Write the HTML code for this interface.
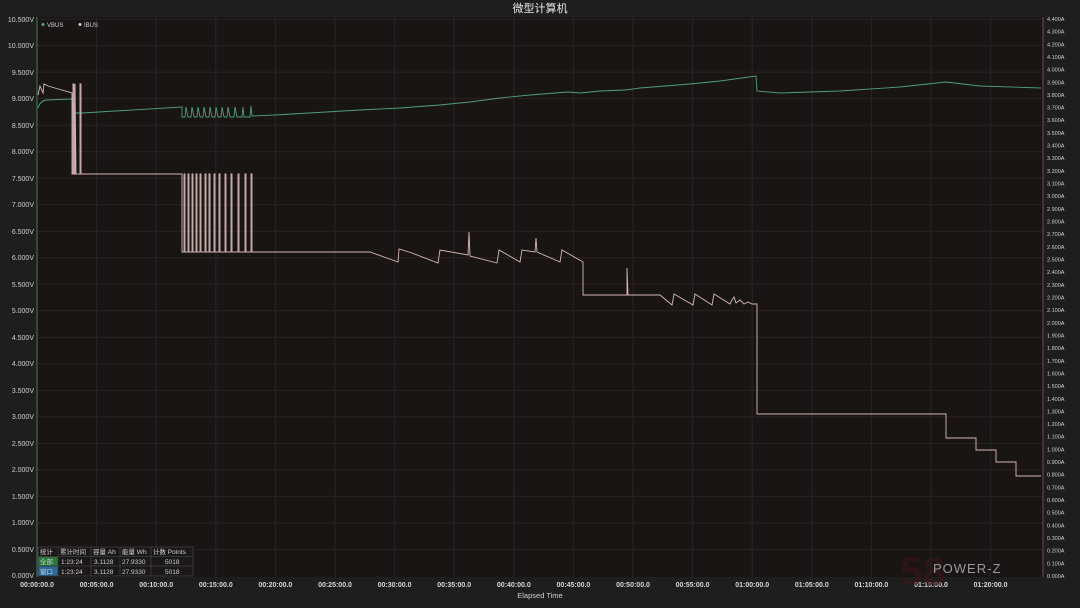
<!DOCTYPE html>
<html><head><meta charset="utf-8"><style>
html,body{margin:0;padding:0;background:#1e1e1e;width:1080px;height:608px;overflow:hidden}
svg text{font-family:"Liberation Sans","Noto Sans CJK SC",sans-serif}
</style></head><body>
<svg width="1080" height="608" viewBox="0 0 1080 608" xmlns="http://www.w3.org/2000/svg">
<rect width="1080" height="608" fill="#1f1e1e"/>
<rect x="37" y="17" width="1006" height="560" fill="#191515"/>
<text x="540" y="12" fill="#e8e8e8" font-size="11" text-anchor="middle">微型计算机</text>
<g stroke="#2a2323" stroke-width="1">
<line x1="37" x2="1043" y1="549.5" y2="549.5"/><line x1="37" x2="1043" y1="523" y2="523"/><line x1="37" x2="1043" y1="496.4" y2="496.4"/><line x1="37" x2="1043" y1="469.9" y2="469.9"/><line x1="37" x2="1043" y1="443.4" y2="443.4"/><line x1="37" x2="1043" y1="416.9" y2="416.9"/><line x1="37" x2="1043" y1="390.4" y2="390.4"/><line x1="37" x2="1043" y1="363.8" y2="363.8"/><line x1="37" x2="1043" y1="337.3" y2="337.3"/><line x1="37" x2="1043" y1="310.8" y2="310.8"/><line x1="37" x2="1043" y1="284.3" y2="284.3"/><line x1="37" x2="1043" y1="257.8" y2="257.8"/><line x1="37" x2="1043" y1="231.2" y2="231.2"/><line x1="37" x2="1043" y1="204.7" y2="204.7"/><line x1="37" x2="1043" y1="178.2" y2="178.2"/><line x1="37" x2="1043" y1="151.7" y2="151.7"/><line x1="37" x2="1043" y1="125.2" y2="125.2"/><line x1="37" x2="1043" y1="98.6" y2="98.6"/><line x1="37" x2="1043" y1="72.1" y2="72.1"/><line x1="37" x2="1043" y1="45.6" y2="45.6"/><line x1="37" x2="1043" y1="19.1" y2="19.1"/>
</g>
<g stroke="#262525" stroke-width="1">
<line y1="17" y2="577" x1="96.6" x2="96.6"/><line y1="17" y2="577" x1="156.2" x2="156.2"/><line y1="17" y2="577" x1="215.8" x2="215.8"/><line y1="17" y2="577" x1="275.4" x2="275.4"/><line y1="17" y2="577" x1="335" x2="335"/><line y1="17" y2="577" x1="394.6" x2="394.6"/><line y1="17" y2="577" x1="454.2" x2="454.2"/><line y1="17" y2="577" x1="513.8" x2="513.8"/><line y1="17" y2="577" x1="573.4" x2="573.4"/><line y1="17" y2="577" x1="633" x2="633"/><line y1="17" y2="577" x1="692.6" x2="692.6"/><line y1="17" y2="577" x1="752.2" x2="752.2"/><line y1="17" y2="577" x1="811.8" x2="811.8"/><line y1="17" y2="577" x1="871.4" x2="871.4"/><line y1="17" y2="577" x1="931" x2="931"/><line y1="17" y2="577" x1="990.6" x2="990.6"/>
</g>
<line x1="37" y1="17" x2="37" y2="577" stroke="#3f7a5a" stroke-width="1"/>
<line x1="1043" y1="17" x2="1043" y2="577" stroke="#6a4a4a" stroke-width="1"/>
<g fill="#cfcfcf" font-size="7" text-anchor="end">
<text x="34" y="578">0.000V</text><text x="34" y="552">0.500V</text><text x="34" y="525">1.000V</text><text x="34" y="499">1.500V</text><text x="34" y="472">2.000V</text><text x="34" y="446">2.500V</text><text x="34" y="419">3.000V</text><text x="34" y="393">3.500V</text><text x="34" y="366">4.000V</text><text x="34" y="340">4.500V</text><text x="34" y="313">5.000V</text><text x="34" y="287">5.500V</text><text x="34" y="260">6.000V</text><text x="34" y="234">6.500V</text><text x="34" y="207">7.000V</text><text x="34" y="181">7.500V</text><text x="34" y="154">8.000V</text><text x="34" y="128">8.500V</text><text x="34" y="101">9.000V</text><text x="34" y="75">9.500V</text><text x="34" y="48">10.000V</text><text x="34" y="22">10.500V</text>
</g>
<g fill="#cfcfcf" font-size="5.5">
<text x="1047" y="578">0.000A</text><text x="1047" y="565.3">0.100A</text><text x="1047" y="552.7">0.200A</text><text x="1047" y="540">0.300A</text><text x="1047" y="527.4">0.400A</text><text x="1047" y="514.7">0.500A</text><text x="1047" y="502">0.600A</text><text x="1047" y="489.4">0.700A</text><text x="1047" y="476.7">0.800A</text><text x="1047" y="464.1">0.900A</text><text x="1047" y="451.4">1.000A</text><text x="1047" y="438.7">1.100A</text><text x="1047" y="426.1">1.200A</text><text x="1047" y="413.4">1.300A</text><text x="1047" y="400.8">1.400A</text><text x="1047" y="388.1">1.500A</text><text x="1047" y="375.4">1.600A</text><text x="1047" y="362.8">1.700A</text><text x="1047" y="350.1">1.800A</text><text x="1047" y="337.5">1.900A</text><text x="1047" y="324.8">2.000A</text><text x="1047" y="312.1">2.100A</text><text x="1047" y="299.5">2.200A</text><text x="1047" y="286.8">2.300A</text><text x="1047" y="274.2">2.400A</text><text x="1047" y="261.5">2.500A</text><text x="1047" y="248.8">2.600A</text><text x="1047" y="236.2">2.700A</text><text x="1047" y="223.5">2.800A</text><text x="1047" y="210.9">2.900A</text><text x="1047" y="198.2">3.000A</text><text x="1047" y="185.5">3.100A</text><text x="1047" y="172.9">3.200A</text><text x="1047" y="160.2">3.300A</text><text x="1047" y="147.6">3.400A</text><text x="1047" y="134.9">3.500A</text><text x="1047" y="122.2">3.600A</text><text x="1047" y="109.6">3.700A</text><text x="1047" y="96.9">3.800A</text><text x="1047" y="84.3">3.900A</text><text x="1047" y="71.6">4.000A</text><text x="1047" y="58.9">4.100A</text><text x="1047" y="46.3">4.200A</text><text x="1047" y="33.6">4.300A</text><text x="1047" y="21">4.400A</text>
</g>
<g fill="#d8d8d8" font-size="7" font-weight="bold" text-anchor="middle">
<text x="37" y="587">00:00:00.0</text><text x="96.6" y="587">00:05:00.0</text><text x="156.2" y="587">00:10:00.0</text><text x="215.8" y="587">00:15:00.0</text><text x="275.4" y="587">00:20:00.0</text><text x="335" y="587">00:25:00.0</text><text x="394.6" y="587">00:30:00.0</text><text x="454.2" y="587">00:35:00.0</text><text x="513.8" y="587">00:40:00.0</text><text x="573.4" y="587">00:45:00.0</text><text x="633" y="587">00:50:00.0</text><text x="692.6" y="587">00:55:00.0</text><text x="752.2" y="587">01:00:00.0</text><text x="811.8" y="587">01:05:00.0</text><text x="871.4" y="587">01:10:00.0</text><text x="931" y="587">01:15:00.0</text><text x="990.6" y="587">01:20:00.0</text>
</g>
<text x="540" y="598" fill="#cfcfcf" font-size="7.5" text-anchor="middle">Elapsed Time</text>
<text x="900" y="585" fill="#3a1616" font-size="40" font-weight="bold" opacity="0.6">58</text>
<text x="933" y="573" fill="#9a9a9a" font-size="13" letter-spacing="1">POWER-Z</text>
<circle cx="43" cy="24.5" r="1.5" fill="#4fae7a"/><text x="47" y="27" fill="#cfcfcf" font-size="6">VBUS</text>
<circle cx="80" cy="24.5" r="1.5" fill="#e0c8c8"/><text x="84" y="27" fill="#cfcfcf" font-size="6">IBUS</text>
<path fill="none" stroke="#4f9f7a" stroke-width="0.9" d="M38,108 Q40,101 46,100 L72,99 L74,113 L82,113 L182,107 L182,117 L185,117 L186,107 L188,117 L191,117 L192,107 L194,117 L197,117 L198,107 L200,117 L203,117 L204,107 L206,117 L209,117 L210,107 L212,117 L215,117 L216,107 L218,117 L221,117 L222,107 L224,117 L227,117 L228,107 L230,117 L234,117 L235,107 L237,117 L242,117 L243,107 L244,117 L250,117 L251,106 L252,116 L275,115 L360,110 L400,108 L440,105 L470,102 L500,98 L530,95 L568,92 L580,93 L600,91 L625,90 L640,88 L690,84 L720,81 L756,76 L757,91 L780,93 L840,91 L900,87 L946,82 L980,86 L1041,88"/>
<path fill="none" stroke="#d8b8b8" stroke-width="0.9" d="M38,95 L40,86 L43,93 L44,84 L48,86 L72,93 L72,174 L73,174 L73,84 L74,84 L74,174 L75,174 L75,84 L76,174 L80,174 L80,84 L81,84 L81,174 L182,174 L182,252 L184,252 L184,174 L185,174 L185,252 L188,252 L188,174 L189,174 L189,252 L192,252 L192,174 L193,174 L193,252 L196,252 L196,174 L197,174 L197,252 L200,252 L200,174 L201,174 L201,252 L205,252 L205,174 L206,174 L206,252 L209,252 L209,174 L210,174 L210,252 L214,252 L214,174 L215,174 L215,252 L219,252 L219,174 L220,174 L220,252 L225,252 L225,174 L226,174 L226,252 L231,252 L231,174 L232,174 L232,252 L238,252 L238,174 L239,174 L239,252 L245,252 L245,174 L246,174 L246,252 L251,252 L251,174 L252,174 L252,252 L370,252 L398,262 L399,249 L412,253 L438,263 L440,250 L468,255 L469,232 L470,256 L497,263 L499,250 L520,262 L522,250 L535,252 L536,238 L537,252 L560,262 L562,250 L583,262 L583,295 L627,295 L627,268 L628,295 L660,295 L672,305 L674,294 L693,305 L695,294 L712,305 L714,294 L730,304 L732,300 L734,297 L736,303 L740,300 L744,304 L748,302 L752,304 L757,304 L757,414 L946,414 L946,438 L976,438 L976,450 L996,450 L996,462 L1016,462 L1016,476 L1041,476"/>
<g font-size="6.5" fill="#cfcfcf">
<rect x="38" y="547" width="155" height="29" fill="#1b1818" stroke="#555" stroke-width="0.5"/>
<line x1="38" y1="556.5" x2="193" y2="556.5" stroke="#555" stroke-width="0.5"/>
<line x1="38" y1="566" x2="193" y2="566" stroke="#555" stroke-width="0.5"/>
<line x1="58" y1="547" x2="58" y2="576" stroke="#555" stroke-width="0.5"/>
<line x1="91" y1="547" x2="91" y2="576" stroke="#555" stroke-width="0.5"/>
<line x1="120" y1="547" x2="120" y2="576" stroke="#555" stroke-width="0.5"/>
<line x1="151" y1="547" x2="151" y2="576" stroke="#555" stroke-width="0.5"/>
<rect x="38.5" y="557" width="19" height="8.5" fill="#2a7a3a"/>
<rect x="38.5" y="566.5" width="19" height="9" fill="#2a6a9a"/>
<text x="40" y="554">统计</text><text x="60" y="554">累计时间</text><text x="93" y="554">容量 Ah</text><text x="122" y="554">能量 Wh</text><text x="153" y="554">计数 Points</text>
<text x="40" y="564">全部</text><text x="61" y="564">1:23:24</text><text x="94" y="564">3.1128</text><text x="122" y="564">27.9330</text><text x="165" y="564">5018</text>
<text x="40" y="574">窗口</text><text x="61" y="574">1:23:24</text><text x="94" y="574">3.1128</text><text x="122" y="574">27.9330</text><text x="165" y="574">5018</text>
</g>
</svg>
</body></html>
